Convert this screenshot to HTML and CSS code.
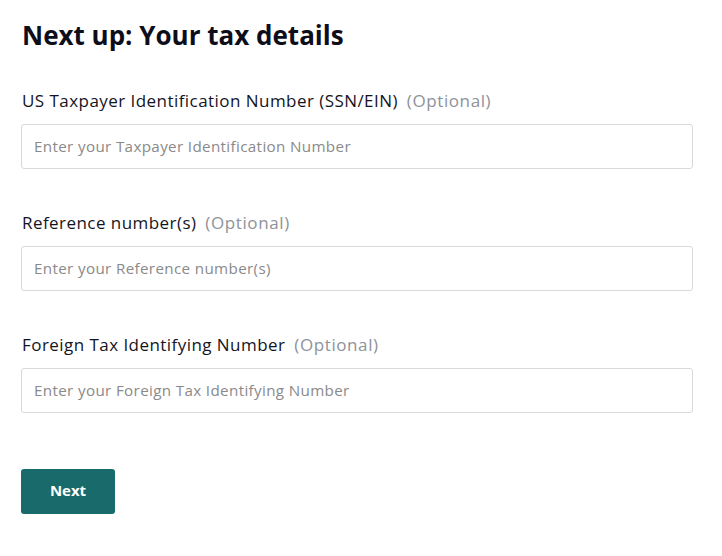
FILE: index.html
```html
<!DOCTYPE html>
<html>
<head>
<meta charset="utf-8">
<link rel="stylesheet" href="styles.css">
</head>
<body>
<main class="page">
  <h1 class="title">Next up: Your tax details</h1>
  <form class="form">
    <div class="field">
      <label class="label">US Taxpayer Identification Number (SSN/EIN) <span class="optional">(Optional)</span></label>
      <input class="input" type="text" placeholder="Enter your Taxpayer Identification Number">
    </div>
    <div class="field">
      <label class="label">Reference number(s) <span class="optional">(Optional)</span></label>
      <input class="input" type="text" placeholder="Enter your Reference number(s)">
    </div>
    <div class="field">
      <label class="label">Foreign Tax Identifying Number <span class="optional">(Optional)</span></label>
      <input class="input" type="text" placeholder="Enter your Foreign Tax Identifying Number">
    </div>
    <div class="actions">
      <button class="button" type="button">Next</button>
    </div>
  </form>
</main>
</body>
</html>
```
FILE: styles.css
```css
html, body {
  margin: 0;
  padding: 0;
  background: #ffffff;
}
body {
  font-family: "Open Sans", "Liberation Sans", sans-serif;
  color: #14141f;
}
.page {
  padding: 17px 29px 0 21px;
}
.title {
  margin: 0;
  font-size: 26px;
  line-height: 36px;
  font-weight: 700;
  color: #0e0e1a;
  padding-left: 1px;
}
.form {
  display: flex;
  flex-direction: column;
  gap: 42px;
  margin-top: 36px;
}
.field {
  display: flex;
  flex-direction: column;
  gap: 11px;
}
.label {
  font-size: 17px;
  line-height: 24px;
  font-weight: 400;
  letter-spacing: 0.45px;
  color: #14141f;
  padding-left: 1px;
}
.optional {
  color: #8e929a;
  margin-left: 4px;
  letter-spacing: 0.6px;
}
.input {
  box-sizing: border-box;
  height: 45px;
  width: 100%;
  border: 1px solid #d9d9d9;
  border-radius: 3px;
  padding: 0 12px 1px;
  font-family: inherit;
  font-size: 15.2px;
  letter-spacing: 0.35px;
  color: #333;
  outline: none;
}
.input::placeholder {
  color: #8a8a8a;
}
.actions {
  margin-top: 14px;
}
.button {
  width: 94px;
  height: 45px;
  border: none;
  border-radius: 3px;
  padding: 0 0 3px;
  background: #196b6b;
  color: #ffffff;
  font-family: inherit;
  font-size: 15px;
  font-weight: 700;
  cursor: pointer;
}
```
